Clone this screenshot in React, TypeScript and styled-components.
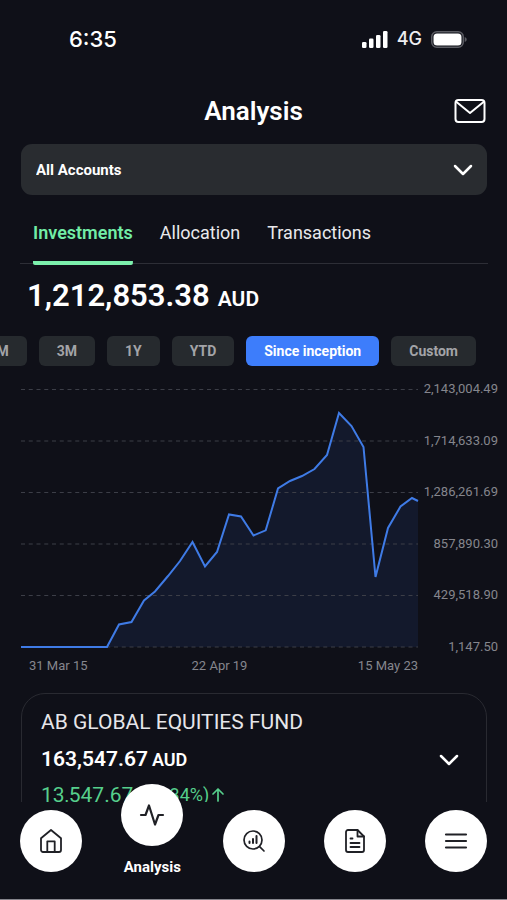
import React from "react";
import styled, { createGlobalStyle } from "styled-components";

const GlobalStyle = createGlobalStyle`
  *, *::before, *::after { box-sizing: border-box; }
  body { margin: 0; background: #0f1018; }
  button, select { font-family: inherit; }
`;

const Screen = styled.div`
  display: flex;
  flex-direction: column;
  height: 100vh;
  overflow: hidden;
  background: #0f1018;
  color: #fff;
  font-family: Roboto, "Liberation Sans", sans-serif;
`;

const StatusBar = styled.div`
  display: flex;
  flex: none;
  align-items: center;
  justify-content: space-between;
  height: 78px;
  padding: 0 40px 0 69px;
  font-family: Inter, sans-serif;
`;

const Clock = styled.time`
  font-size: 22px;
  font-weight: 500;
  line-height: 28px;
`;

const StatusIcons = styled.div`
  display: flex;
  align-items: center;
  gap: 9px;
  font-size: 18px;
  font-weight: 500;
  line-height: 24px;
  color: #ededf0;
`;

const Header = styled.header`
  display: grid;
  flex: none;
  grid-template-columns: 32px 1fr 32px;
  align-items: center;
  height: 66px;
  padding: 0 21px;
`;

const Title = styled.h1`
  grid-column: 2;
  margin: 0;
  font-size: 26px;
  font-weight: 600;
  line-height: 32px;
  text-align: center;
`;

const IconButton = styled.button`
  display: flex;
  align-items: center;
  justify-content: center;
  padding: 0;
  border: 0;
  background: none;
  color: inherit;
  cursor: pointer;
`;

const Content = styled.main`
  flex: 1;
  min-height: 0;
  overflow: hidden;
`;

const SelectBox = styled.div`
  display: grid;
  align-items: center;
  margin: 0 20px 0 21px;

  > * { grid-area: 1 / 1; }
  > svg { justify-self: end; margin-right: 14px; pointer-events: none; }
`;

const AccountSelect = styled.select`
  width: 100%;
  height: 51px;
  padding: 0 48px 0 15px;
  border: 0;
  border-radius: 11px;
  appearance: none;
  background: #292c30;
  color: #fff;
  font-size: 15px;
  font-weight: 700;
`;

const Tabs = styled.div`
  display: flex;
  gap: 27px;
  height: 69px;
  margin: 0 19px 0 20px;
  padding-left: 13px;
  border-bottom: 1px solid #2d2e36;
`;

const Tab = styled.button<{ $active?: boolean }>`
  height: 70px;
  padding: 10px 0 0;
  border: 0;
  border-bottom: 4px solid transparent;
  background: ${(p) =>
    p.$active
      ? "linear-gradient(#7cf0ac, #7cf0ac) bottom / 100% 4px no-repeat border-box"
      : "none"};
  border-radius: 2px;
  color: ${(p) => (p.$active ? "#72eda6" : "#e9e9ec")};
  font-size: 18px;
  font-weight: ${(p) => (p.$active ? 600 : 400)};
  line-height: 24px;
  cursor: pointer;
`;

const Total = styled.p`
  display: flex;
  align-items: baseline;
  gap: 8px;
  margin: 12px 27px 0;
  font-size: 31px;
  font-weight: 600;
  line-height: 40px;
`;

const TotalUnit = styled.span`
  font-size: 21px;
`;

const Ranges = styled.div`
  display: flex;
  justify-content: flex-end;
  gap: 12px;
  margin-top: 17px;
  padding-right: 31px;
  overflow: hidden;
`;

const Range = styled.button<{ $active?: boolean }>`
  flex: none;
  height: 30px;
  padding: 0 18px;
  border: 0;
  border-radius: 6px;
  background: ${(p) => (p.$active ? "#3d7dfb" : "#262a2e")};
  color: ${(p) => (p.$active ? "#fff" : "#a3a4a8")};
  font-size: 14px;
  font-weight: 700;
  line-height: 20px;
  cursor: pointer;
`;

const Chart = styled.figure`
  display: grid;
  grid-template-columns: 1fr 80px;
  margin: 13px 9px 0 21px;
  color: #85868d;
  font-size: 13px;
  line-height: 20px;
`;

const Plot = styled.svg`
  display: block;
  width: 100%;
  height: 258px;
  margin: 10px 0;
  overflow: visible;
`;

const ValueAxis = styled.div`
  display: flex;
  flex-direction: column;
  justify-content: space-between;
  text-align: right;
`;

const DateAxis = styled.figcaption`
  display: grid;
  grid-template-columns: 1fr auto 1fr;
  margin-top: -1px;

  > :first-child { padding-left: 8px; }
  > :last-child { text-align: right; }
`;

const FundCard = styled.article`
  display: grid;
  grid-template-columns: 1fr auto;
  align-items: center;
  margin: 17px 20px 0 21px;
  padding: 10px 27px 20px 19px;
  border: 1px solid #292a31;
  border-radius: 24px;
`;

const FundName = styled.h2`
  grid-column: 1 / -1;
  margin: 0;
  color: #e6e6ea;
  font-size: 21px;
  font-weight: 400;
  line-height: 36px;
`;

const FundValue = styled.p`
  margin: 0;
  font-size: 21px;
  font-weight: 600;
  line-height: 38px;
`;

const FundUnit = styled.span`
  margin-left: 4px;
  font-size: 18px;
`;

const FundGain = styled.p`
  display: flex;
  grid-column: 1 / -1;
  align-items: center;
  gap: 5px;
  margin: 0;
  color: #56cf8c;
  font-size: 21px;
  line-height: 32px;
`;

const GainPercent = styled.span`
  display: flex;
  align-items: center;
  gap: 2px;
  font-size: 18px;
`;

const Nav = styled.nav`
  position: relative;
  display: flex;
  flex: none;
  align-items: flex-start;
  justify-content: space-between;
  padding: 8px 20px 22px;
  border-bottom: 1px solid #85858c;
  background: #0f1018;
`;

const NavItem = styled.a<{ $active?: boolean }>`
  display: flex;
  flex-direction: column;
  align-items: center;
  gap: 11px;
  width: 62px;
  margin-top: ${(p) => (p.$active ? "-26px" : "0")};
  color: #fff;
  font-size: 15px;
  font-weight: 700;
  line-height: 20px;
  text-decoration: none;
`;

const NavCircle = styled.span`
  display: flex;
  align-items: center;
  justify-content: center;
  width: 62px;
  height: 62px;
  border-radius: 50%;
  background: #fff;
  color: #202126;
`;

const line = {
  fill: "none",
  stroke: "currentColor",
  strokeLinecap: "round",
  strokeLinejoin: "round",
} as const;

const SignalIcon = () => (
  <svg width="26" height="17" viewBox="0 0 26 17" fill="#fff" aria-hidden="true">
    <rect x="0" y="11" width="4.500" height="6" rx="1.3" />
    <rect x="7" y="7.5" width="4.500" height="9.5" rx="1.3" />
    <rect x="14" y="4" width="4.500" height="13" rx="1.3" />
    <rect x="21" y="0" width="4.500" height="17" rx="1.3" />
  </svg>
);

const BatteryIcon = () => (
  <svg width="36" height="17" viewBox="0 0 36 17" aria-hidden="true">
    <rect x="0.75" y="0.75" width="31.5" height="15.5" rx="5" fill="none" stroke="#5b5c63" strokeWidth="1.5" />
    <rect x="2.500" y="2.500" width="28" height="12" rx="3.500" fill="#fff" />
    <path d="M33.7 6v5c1.3-.4 2-1.400 2-2.500s-.7-2.100-2-2.500z" fill="#5b5c63" />
  </svg>
);

const MailIcon = () => (
  <svg width="32" height="24" viewBox="0 0 32 24" {...line} strokeWidth="2" aria-hidden="true">
    <rect x="1.500" y="1" width="29" height="22" rx="3" />
    <path d="M2.500 3 16 14 29.500 3" />
  </svg>
);

const ChevronIcon = () => (
  <svg width="20" height="12" viewBox="0 0 20 12" {...line} strokeWidth="2.500" aria-hidden="true">
    <path d="M2 2l8 8 8-8" />
  </svg>
);

const ArrowUpIcon = () => (
  <svg width="14" height="16" viewBox="0 0 14 16" {...line} strokeWidth="1.700" aria-hidden="true">
    <path d="M7 14V2M2 7l5-5 5 5" />
  </svg>
);

const HomeIcon = () => (
  <svg width="24" height="26" viewBox="0 0 24 26" {...line} strokeWidth="1.800" aria-hidden="true">
    <path d="M2 10.200 12 2l10 8.200V22a2 2 0 0 1-2 2H4a2 2 0 0 1-2-2z" />
    <path d="M8.300 24V13.300h7.400V24" />
  </svg>
);

const PulseIcon = () => (
  <svg width="26" height="24" viewBox="0 0 26 24" {...line} strokeWidth="2.200" aria-hidden="true">
    <path d="M2 12h4.500L10 2.500l6 19 3.500-9.500H24" />
  </svg>
);

const ResearchIcon = () => (
  <svg width="24" height="24" viewBox="0 0 24 24" {...line} strokeWidth="1.700" aria-hidden="true">
    <circle cx="11" cy="11" r="9" />
    <path d="M17.600 17.600 22 22" />
    <path d="M7.500 12.500v1.500M11 10v4M14.500 7v7" strokeWidth="2" />
  </svg>
);

const DocumentIcon = () => (
  <svg width="22" height="26" viewBox="0 0 22 26" {...line} strokeWidth="1.800" aria-hidden="true">
    <path d="M13.500 2H4A2 2 0 0 0 2 4v18A2 2 0 0 0 4 24h14a2 2 0 0 0 2-2V8.500z" />
    <path d="M13.500 2v6.500H20M6.500 10.500h2M6.500 15h9M6.500 19h9" />
  </svg>
);

const MenuIcon = () => (
  <svg width="24" height="18" viewBox="0 0 24 18" {...line} strokeWidth="2.200" aria-hidden="true">
    <path d="M2 2.500h20M2 9h20M2 15.500h20" />
  </svg>
);

const gridLines = [0.5, 52, 103.5, 155, 206.5, 258];
const values = ["2,143,004.49", "1,714,633.09", "1,286,261.69", "857,890.30", "429,518.90", "1,147.50"];
const series =
  "0,258 86,258 98,235.500 110.500,233 123,211.500 134,202.500 147,187 159,172 171.500,153 184,177.500 196,163 208,125.500 220,127.500 232.500,146.500 244.700,141.300 257,99.500 269,92 281,87 293.500,80 306,66 318,24 330.500,37 342.500,58 354.500,188 367,139 379.500,117.500 391,109 397,112";

const ranges = ["1M", "3M", "1Y", "YTD", "Since inception", "Custom"];
const tabs = ["Investments", "Allocation", "Transactions"];

const navItems = [
  { label: "Home", icon: <HomeIcon /> },
  { label: "Analysis", icon: <PulseIcon />, active: true },
  { label: "Research", icon: <ResearchIcon /> },
  { label: "Documents", icon: <DocumentIcon /> },
  { label: "Menu", icon: <MenuIcon /> },
];

export default function App() {
  return (
    <Screen>
      <GlobalStyle />
      <StatusBar>
        <Clock>6:35</Clock>
        <StatusIcons>
          <SignalIcon />
          4G
          <BatteryIcon />
        </StatusIcons>
      </StatusBar>
      <Header>
        <Title>Analysis</Title>
        <IconButton aria-label="Messages">
          <MailIcon />
        </IconButton>
      </Header>
      <Content>
        <SelectBox>
          <AccountSelect aria-label="Account">
            <option>All Accounts</option>
          </AccountSelect>
          <ChevronIcon />
        </SelectBox>
        <Tabs role="tablist">
          {tabs.map((name, i) => (
            <Tab key={name} role="tab" aria-selected={i === 0} $active={i === 0}>
              {name}
            </Tab>
          ))}
        </Tabs>
        <Total>
          1,212,853.38 <TotalUnit>AUD</TotalUnit>
        </Total>
        <Ranges>
          {ranges.map((name) => (
            <Range key={name} $active={name === "Since inception"}>
              {name}
            </Range>
          ))}
        </Ranges>
        <Chart>
          <Plot viewBox="0 0 397 258" preserveAspectRatio="none" role="img" aria-label="Portfolio value">
            <polygon points={`${series} 397,258 0,258`} fill="#3d7dfb" fillOpacity="0.09" />
            {gridLines.map((y) => (
              <line key={y} x1="0" x2="397" y1={y} y2={y} stroke="#3c3e47" strokeWidth="1.200" strokeDasharray="4 3.750" vectorEffect="non-scaling-stroke" />
            ))}
            <polyline points={series} fill="none" stroke="#3f7be6" strokeWidth="2" vectorEffect="non-scaling-stroke" />
          </Plot>
          <ValueAxis>
            {values.map((v) => (
              <span key={v}>{v}</span>
            ))}
          </ValueAxis>
          <DateAxis>
            <span>31 Mar 15</span>
            <span>22 Apr 19</span>
            <span>15 May 23</span>
          </DateAxis>
        </Chart>
        <FundCard>
          <FundName>AB GLOBAL EQUITIES FUND</FundName>
          <FundValue>
            163,547.67
            <FundUnit>AUD</FundUnit>
          </FundValue>
          <IconButton aria-label="Show fund details">
            <ChevronIcon />
          </IconButton>
          <FundGain>
            13,547.67
            <GainPercent>
              (+9.34%)
              <ArrowUpIcon />
            </GainPercent>
          </FundGain>
        </FundCard>
      </Content>
      <Nav>
        {navItems.map(({ label, icon, active }) => (
          <NavItem key={label} href="#" aria-label={label} aria-current={active ? "page" : undefined} $active={active}>
            <NavCircle>{icon}</NavCircle>
            {active && label}
          </NavItem>
        ))}
      </Nav>
    </Screen>
  );
}
